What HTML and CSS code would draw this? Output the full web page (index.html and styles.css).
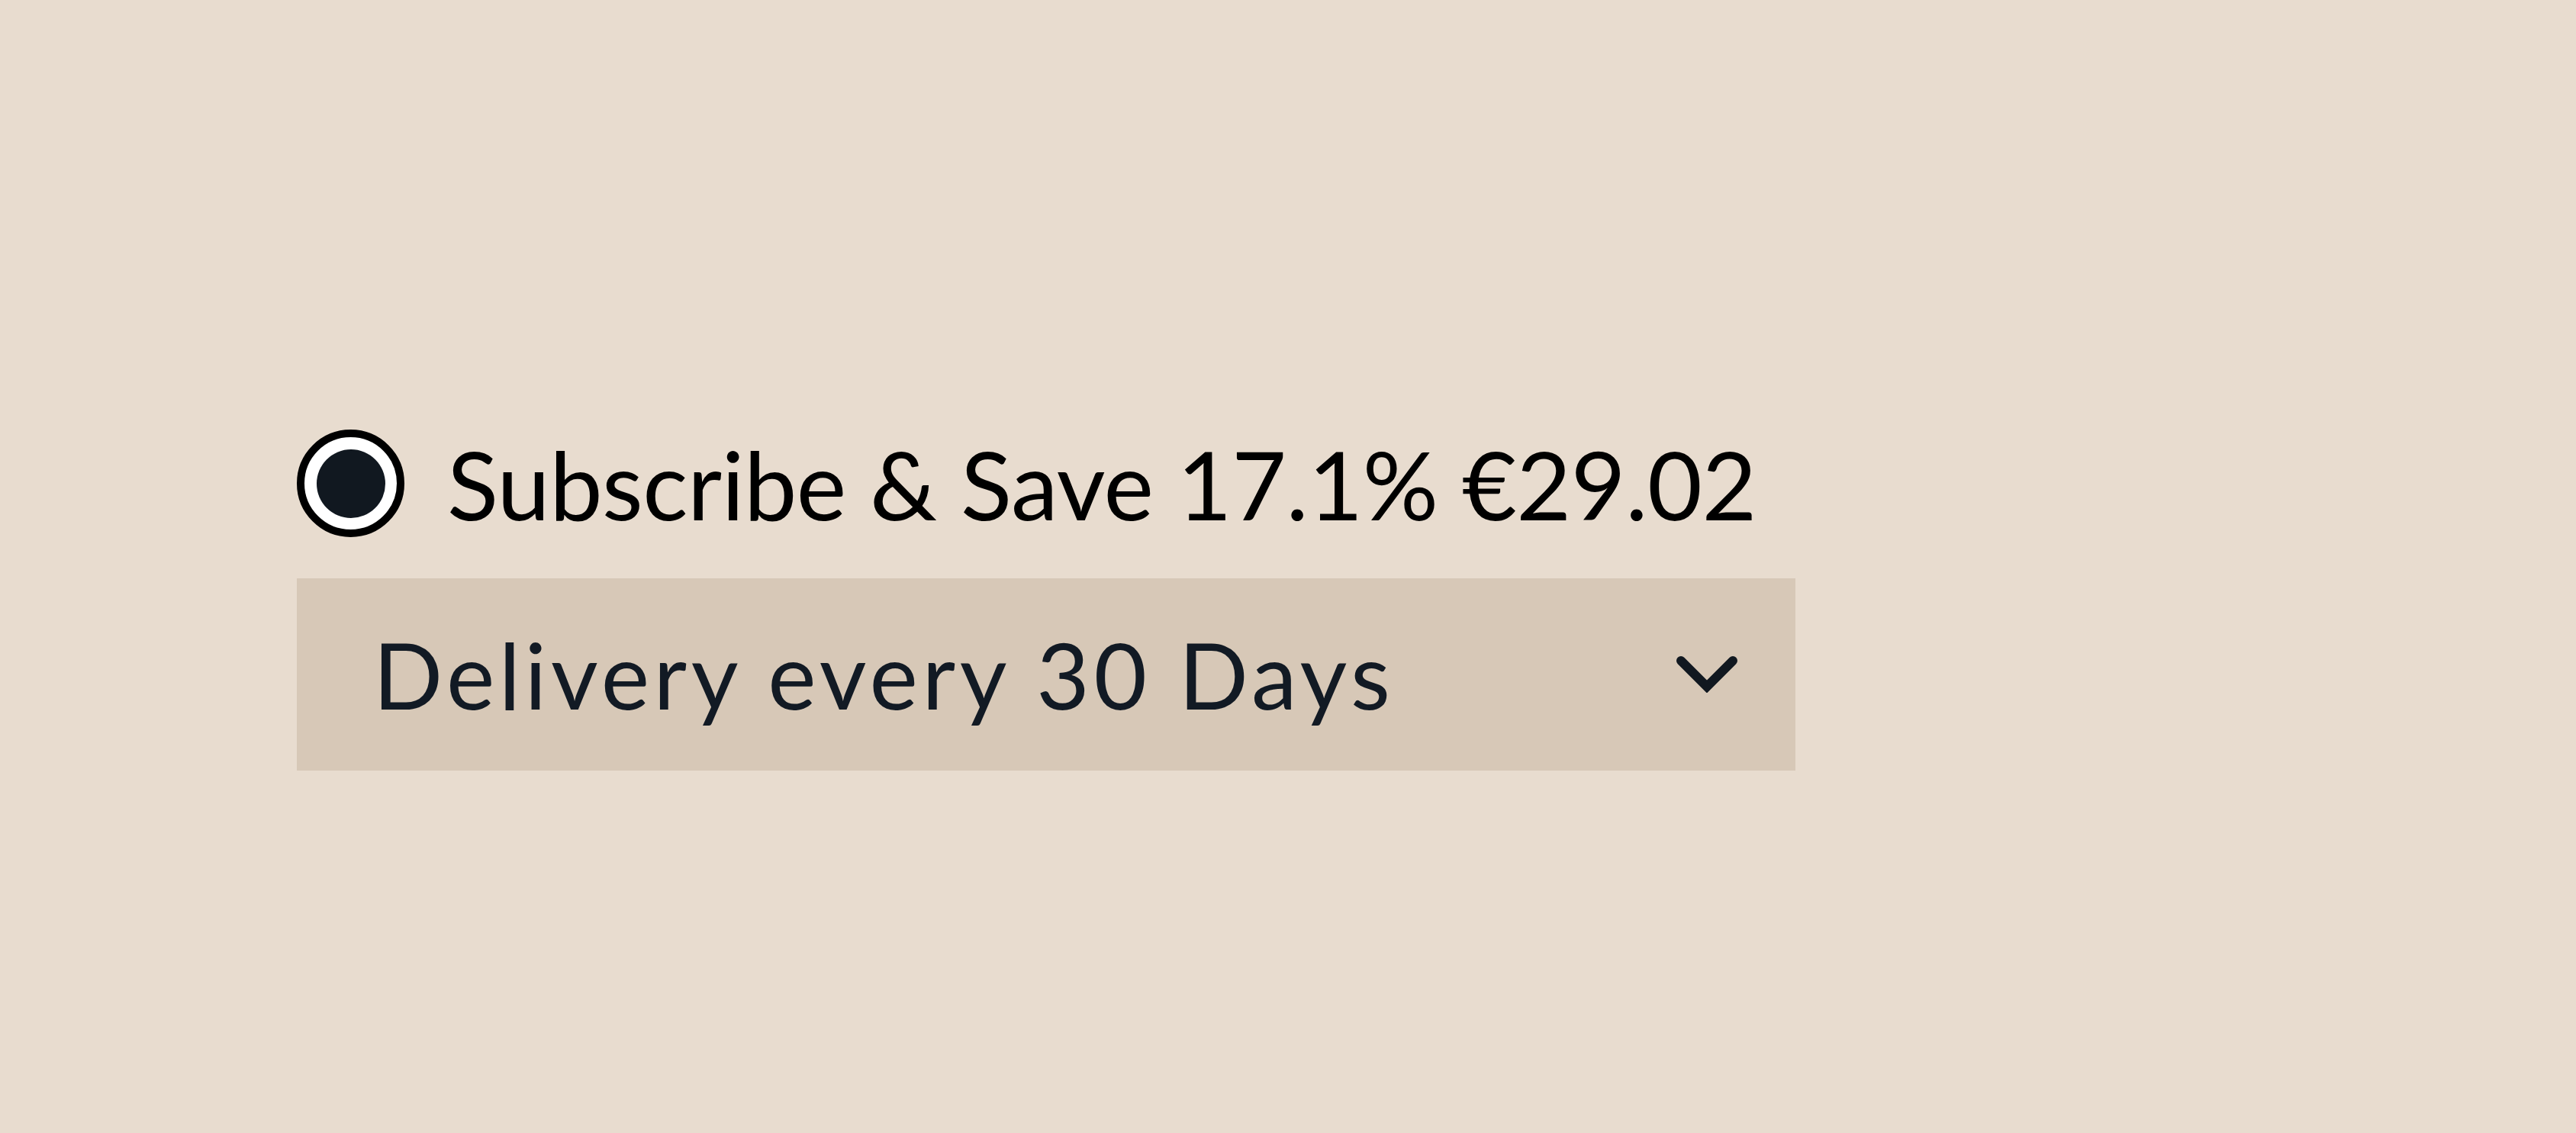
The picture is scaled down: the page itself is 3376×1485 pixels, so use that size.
FILE: index.html
```html
<!DOCTYPE html>
<html lang="en">
<head>
<meta charset="utf-8">
<title>Subscribe &amp; Save</title>
<link rel="stylesheet" href="styles.css">
</head>
<body>
<main class="page">
  <div class="option">
    <label class="option-row">
      <span class="radio"><span class="radio-dot"></span></span>
      <span class="option-label">Subscribe &amp; Save 17.1% €29.02</span>
    </label>
    <div class="select">
      <span class="select-text">Delivery every 30 Days</span>
      <svg class="chevron" viewBox="0 0 80 48" width="80" height="48" aria-hidden="true">
        <polyline points="6,6 40,40 74,6" fill="none" stroke="#111820" stroke-width="12" stroke-linecap="round" stroke-linejoin="miter"/>
      </svg>
    </div>
  </div>
</main>
</body>
</html>
```

FILE: styles.css
```css
html, body {
  margin: 0;
  padding: 0;
}

body {
  background: #e8dccf;
  font-family: "Lato", "Noto Sans", sans-serif;
  width: 3376px;
  height: 1485px;
  overflow: hidden;
}

.page {
  padding: 563px 0 0 389px;
}

.option {
  display: flex;
  flex-direction: column;
  gap: 54px;
  width: 1964px;
}

.option-row {
  display: flex;
  align-items: center;
  gap: 56px;
  height: 141px;
}

.radio {
  box-sizing: border-box;
  width: 141px;
  height: 141px;
  border-radius: 50%;
  border: 10px solid #000;
  background: #fff;
  display: flex;
  align-items: center;
  justify-content: center;
  flex: none;
}

.radio-dot {
  width: 90px;
  height: 90px;
  border-radius: 50%;
  background: #111820;
}

.option-label {
  font-size: 124px;
  color: #000;
  line-height: 1;
  letter-spacing: -0.5px;
  white-space: nowrap;
}

.select {
  box-sizing: border-box;
  height: 252px;
  background: #d7c8b7;
  display: flex;
  align-items: center;
  justify-content: space-between;
  padding: 0 76px 0 100px;
}

.select-text {
  font-size: 120px;
  color: #121a24;
  line-height: 1;
  letter-spacing: 5.5px;
  white-space: nowrap;
}

.chevron {
  display: block;
  width: 80px;
  height: 48px;
}
```
